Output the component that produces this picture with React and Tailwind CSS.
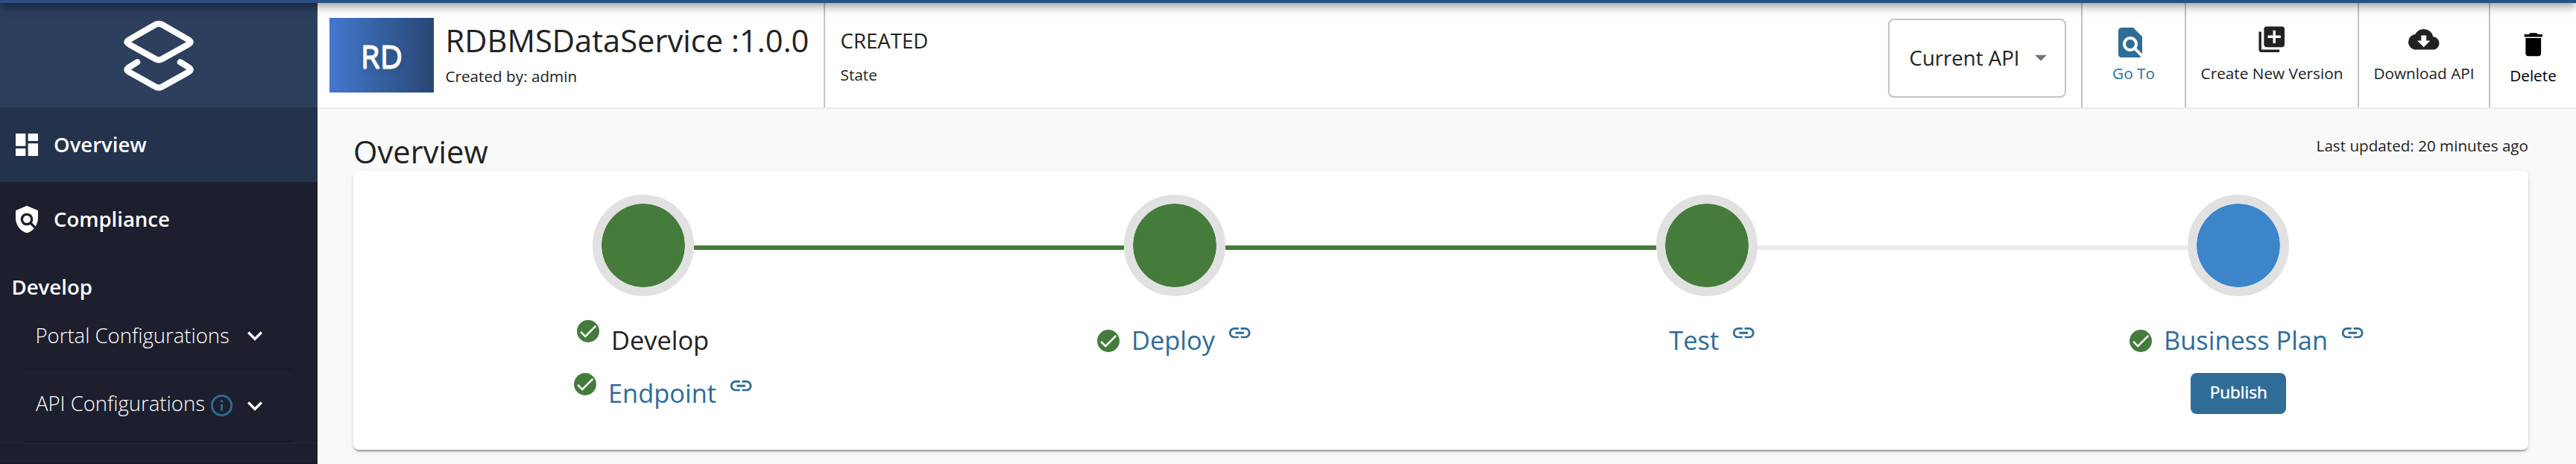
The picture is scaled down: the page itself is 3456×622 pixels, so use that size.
import {
  MdArrowDropDown,
  MdCheck,
  MdCloudDownload,
  MdDashboard,
  MdDelete,
  MdExpandMore,
  MdFindInPage,
  MdInfoOutline,
  MdLibraryAdd,
  MdLink,
  MdPolicy,
} from "react-icons/md";

function Logo() {
  return (
    <svg viewBox="0 0 96 96" className="size-24" fill="none" stroke="#fff" strokeWidth="8.2" strokeLinecap="round" strokeLinejoin="round">
      <path d="M43.7 6.9Q48 4.8 52.3 6.9L86.5 26.5C92 29.6 92 31 86.5 34.1L52.3 53.2Q48 55.4 43.7 53.2L9.5 34.1C4 31 4 29.6 9.5 26.5Z" />
      <path d="M19.2 57.3L9.5 63.3C4 66.6 4 68.2 9.5 71.3L43.7 90.4Q48 92.6 52.3 90.4L86.5 71.3C92 68.2 92 66.6 86.5 63.3L76.8 57.3" />
    </svg>
  );
}

function Sidebar() {
  return (
    <aside className="flex h-[618px] w-[426px] shrink-0 flex-col bg-[#1d1f2e] text-[27.5px] leading-none text-white">
      <div className="flex h-[140px] items-center justify-center bg-[#2c3f5d]">
        <Logo />
      </div>
      <div className="flex h-[100px] items-center gap-4 bg-[#22334b] px-4 font-semibold">
        <MdDashboard className="size-10" />
        <span className="pb-px">Overview</span>
      </div>
      <div className="flex h-[100px] items-center gap-4 px-4 font-semibold">
        <MdPolicy className="size-10" />
        <span className="pb-px">Compliance</span>
      </div>
      <div className="flex h-[81px] items-center px-[15.5px] pt-px text-[27.6px] font-semibold">Develop</div>
      <div className="mx-8 flex h-[71px] items-start justify-between border-b-2 border-[#191a27] pr-[32px] pl-[15.5px]">
        <span className="flex h-[49px] items-center font-light">Portal Configurations</span>
        <MdExpandMore className="mt-[5px] size-10" />
      </div>
      <div className="mx-8 flex h-[97px] items-center border-b-2 border-[#191a27] pr-[32px] pl-4">
        <span className="pb-[6px] font-light">API Configurations</span>
        <MdInfoOutline className="ml-[5px] size-[35px] text-[#2f6c98]" />
        <MdExpandMore className="ml-auto size-10" />
      </div>
      <div className="flex-1 border-t-2 border-b border-t-[#212332] border-b-[#171925]" />
    </aside>
  );
}

function Action({ icon, label, className }) {
  return (
    <div className={"flex h-full shrink-0 flex-col items-center border-l-2 border-[#c4c4c4] text-[20.75px] leading-none " + className}>
      {icon}
      <span className="flex h-6 items-center whitespace-nowrap">{label}</span>
    </div>
  );
}

function Header() {
  return (
    <header className="flex h-[142px] border-b-2 border-[#ebebeb] bg-white">
      <div className="flex w-[679px] shrink-0 pt-5 pl-4">
        <div className="flex h-[100px] w-[140px] items-center justify-center bg-linear-to-r from-[#4577cf] via-[#35609f] to-[#294675] pt-px text-[42px] leading-none text-white [-webkit-text-stroke:1px_#fff] [text-shadow:0_2px_0_#c9c9c9,0_4px_8px_rgba(0,0,0,0.2)]">
          RD
        </div>
        <div className="ml-[15.5px] flex flex-col whitespace-nowrap">
          <h1 className="flex h-[60px] items-center text-[41.7px] leading-none">RDBMSDataService :1.0.0</h1>
          <span className="flex h-9 items-center text-[20.7px] leading-none">Created by: admin</span>
        </div>
      </div>
      <div className="flex flex-1 flex-col border-l-2 border-[#c4c4c4] pt-5 pl-[20.5px]">
        <span className="flex h-[61px] items-center text-[27.6px] leading-none">CREATED</span>
        <span className="flex h-[30px] items-center text-[20.75px] leading-none">State</span>
      </div>
      <div className="mt-[21px] mr-5 flex h-[106px] w-[239px] items-center justify-between rounded-lg border-2 border-[#c4c4c4] pr-[13px] pb-[2px] pl-[26.5px]">
        <span className="pt-[1.5px] text-[27.6px] leading-none">Current API</span>
        <MdArrowDropDown className="size-[38px] text-[#757575]" />
      </div>
      <Action
        className="w-[139px] text-[#2f6c98]"
        label="Go To"
        icon={<MdFindInPage className="mt-[29px] mr-[9px] mb-[5px] size-12" />}
      />
      <Action
        className="w-[232px]"
        label="Create New Version"
        icon={<MdLibraryAdd className="mt-[27.5px] mb-[13px] size-[41.5px]" />}
      />
      <Action
        className="w-[176px]"
        label="Download API"
        icon={<MdCloudDownload className="mt-[27.5px] mb-[13px] size-[41.5px]" />}
      />
      <Action
        className="w-[117px] text-black"
        label="Delete"
        icon={<MdDelete className="mt-[35px] mb-[8.5px] size-[41.5px]" />}
      />
    </header>
  );
}

function Check({ className = "" }) {
  return (
    <span className={"mr-4 flex size-[30px] items-center justify-center rounded-full bg-[#457b3b] text-white " + className}>
      <MdCheck className="size-[30px]" />
    </span>
  );
}

function StepLink({ children }) {
  return (
    <>
      <span className="pt-[1.5px] text-[#2f6c98]">{children}</span>
      <MdLink className="mt-[2px] ml-4 size-[34.4px] self-start text-[#2f6c98]" />
    </>
  );
}

function Step({ left, right, fill, children }) {
  return (
    <div className="min-w-0 flex-1">
      <div className="flex items-start">
        <div className={"mt-[68px] h-1.5 flex-1 rounded-r-[1px] " + left} />
        <div className={"size-[136px] rounded-full border-12 border-[#e1e1e1] bg-clip-padding " + fill} />
        <div className={"mt-[68px] h-1.5 flex-1 rounded-l-[1px] " + right} />
      </div>
      <div className="pt-[30px] text-[34.4px] leading-none whitespace-nowrap">{children}</div>
    </div>
  );
}

const GREEN = "bg-[#457b3b]";
const GREY = "bg-[#e9eaee]";

export default function App() {
  return (
    <div className="h-[622px] overflow-hidden bg-[#f9f9f9] font-['Open_Sans',sans-serif] text-[#222]">
      <div className="relative z-10 -mt-[124px] h-32 bg-[#2c4f84] shadow-[0_4px_8px_-2px_rgba(0,0,0,0.2),0_8px_10px_0_rgba(0,0,0,0.14),0_2px_20px_0_rgba(0,0,0,0.12)]" />
      <div className="flex">
        <Sidebar />
        <div className="min-w-0 flex-1">
          <Header />
          <main className="pr-16 pl-12">
            <div className="flex h-[83px] justify-between">
              <h2 className="flex h-[113px] items-center text-[41.7px] leading-none">Overview</h2>
              <span className="flex h-[98px] items-center text-[20.65px] leading-none">Last updated: 20 minutes ago</span>
            </div>
            <section className="flex h-[374px] rounded-lg bg-white px-8 pt-8 shadow-[0_4px_2px_-2px_rgba(0,0,0,0.2),0_2px_2px_0_rgba(0,0,0,0.14),0_2px_6px_0_rgba(0,0,0,0.12)]">
              <Step left="bg-transparent" right={GREEN} fill={GREEN}>
                <div className="flex h-[57px] items-center pl-[268px]">
                  <Check className="mb-[23px]" />
                  <span className="pt-[1.5px]">Develop</span>
                </div>
                <div className="flex h-[85px] items-center pl-[264px]">
                  <Check className="mb-[23px]" />
                  <span className="pt-[1.5px] text-[#2f6c98]">Endpoint</span>
                  <MdLink className="mb-[18px] ml-4 size-[34.4px] text-[#2f6c98]" />
                </div>
              </Step>
              <Step left={GREEN} right={GREEN} fill={GREEN}>
                <div className="flex h-[57px] items-center pl-[252.5px]">
                  <Check className="mt-[3px]" />
                  <StepLink>Deploy</StepLink>
                </div>
              </Step>
              <Step left={GREEN} right={GREY} fill={GREEN}>
                <div className="flex h-[57px] items-center pl-[306.3px]">
                  <StepLink>Test</StepLink>
                </div>
              </Step>
              <Step left={GREY} right="bg-transparent" fill="bg-[#3c85cb]">
                <div className="flex h-[57px] items-center pl-[210.5px]">
                  <Check className="mt-[3px]" />
                  <StepLink>Business Plan</StepLink>
                </div>
                <button className="mx-auto mt-4 flex h-[55px] w-32 items-center justify-center rounded-lg bg-[#2f6c98] pb-[2px] text-[22.5px] leading-none text-white [-webkit-text-stroke:0.5px_#fff]">
                  Publish
                </button>
              </Step>
            </section>
          </main>
        </div>
      </div>
    </div>
  );
}
